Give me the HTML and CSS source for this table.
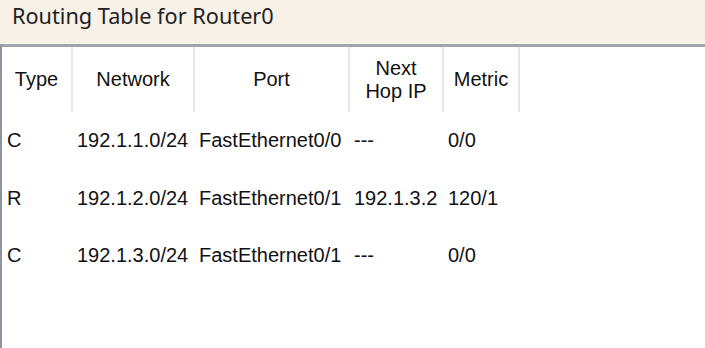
FILE: index.html
```html
<!DOCTYPE html>
<html lang="en">
<head>
    <title>Routing Table for Router0</title>
    <link rel="stylesheet" href="styles.css">
</head>
<body>
    <div class="title-bar">Routing Table for Router0</div>
    <div class="panel">
        <table class="routes">
            <colgroup>
                <col class="col-type">
                <col class="col-network">
                <col class="col-port">
                <col class="col-hop">
                <col class="col-metric">
                <col>
            </colgroup>
            <thead>
                <tr>
                    <th>Type</th>
                    <th>Network</th>
                    <th>Port</th>
                    <th>Next<br>Hop IP</th>
                    <th>Metric</th>
                    <th class="filler"></th>
                </tr>
            </thead>
            <tbody>
                <tr>
                    <td>C</td>
                    <td>192.1.1.0/24</td>
                    <td>FastEthernet0/0</td>
                    <td>---</td>
                    <td>0/0</td>
                    <td></td>
                </tr>
                <tr>
                    <td>R</td>
                    <td>192.1.2.0/24</td>
                    <td>FastEthernet0/1</td>
                    <td>192.1.3.2</td>
                    <td>120/1</td>
                    <td></td>
                </tr>
                <tr>
                    <td>C</td>
                    <td>192.1.3.0/24</td>
                    <td>FastEthernet0/1</td>
                    <td>---</td>
                    <td>0/0</td>
                    <td></td>
                </tr>
            </tbody>
        </table>
    </div>
</body>
</html>
```

FILE: styles.css
```css
html, body {
    height: 100%;
}
body {
    margin: 0;
    display: flex;
    flex-direction: column;
    background-color: #f8f1e8;
    font-family: "Liberation Sans", Arial, sans-serif;
    color: #111;
    overflow: hidden;
}
.title-bar {
    height: 43px;
    padding-left: 12px;
    font-family: "Noto Sans", "Open Sans", sans-serif;
    font-size: 21.7px;
    line-height: 31px;
    color: #222;
    border-bottom: 1px solid #fdfbf8;
}
.panel {
    flex: 1;
    background-color: #fff;
    border-top: 3px solid #a0a4ad;
    border-left: 2px solid #8f949d;
}
.routes {
    border-collapse: collapse;
    table-layout: fixed;
    width: 100%;
    font-size: 20px;
}
.col-type { width: 70px; }
.col-network { width: 122px; }
.col-port { width: 155px; }
.col-hop { width: 94px; }
.col-metric { width: 76px; }
.routes th {
    height: 65px;
    padding: 0;
    font-weight: normal;
    text-align: center;
    line-height: 23px;
    border-right: 2px solid #e8e8e8;
}
.routes th.filler {
    border-right: none;
}
.routes td {
    height: 57.5px;
    padding: 0 0 0 5px;
    white-space: nowrap;
}
```
